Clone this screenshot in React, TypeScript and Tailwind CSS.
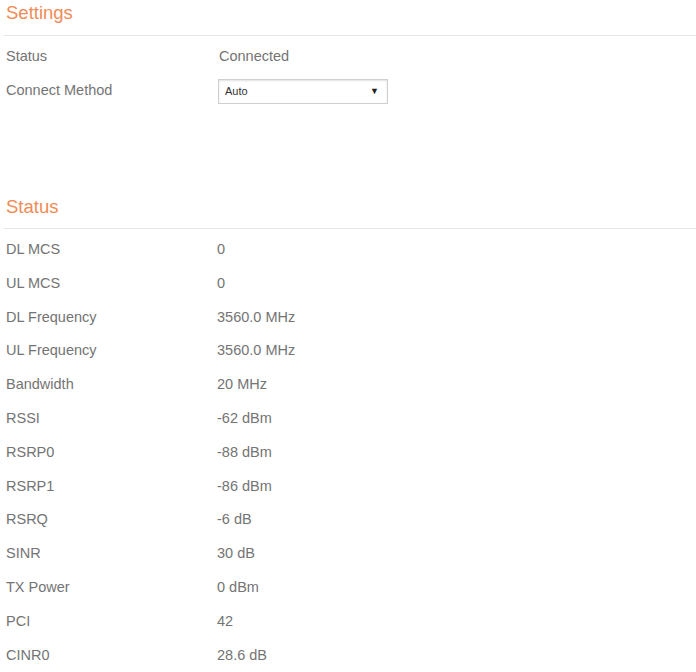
import React from "react";

const statusRows: [string, string][] = [
  ["DL MCS", "0"],
  ["UL MCS", "0"],
  ["DL Frequency", "3560.0 MHz"],
  ["UL Frequency", "3560.0 MHz"],
  ["Bandwidth", "20 MHz"],
  ["RSSI", "-62 dBm"],
  ["RSRP0", "-88 dBm"],
  ["RSRP1", "-86 dBm"],
  ["RSRQ", "-6 dB"],
  ["SINR", "30 dB"],
  ["TX Power", "0 dBm"],
  ["PCI", "42"],
  ["CINR0", "28.6 dB"],
];

export default function App() {
  return (
    <div
      className="w-[696px] h-[672px] bg-white overflow-hidden text-[#747474]"
      style={{ fontFamily: '"Liberation Sans", Arial, sans-serif' }}
    >
      {/* Settings */}
      <div className="ml-[4px] h-[36px] border-b border-[#e6e6e6]">
        <div className="pl-[2px] text-[18.5px] leading-[26px] text-[#f08b57]">Settings</div>
      </div>
      <div className="mt-[4px]">
        <div className="flex h-[34px] items-center text-[14.5px]">
          <div className="w-[219px] pl-[6px]">Status</div>
          <div>Connected</div>
        </div>
        <div className="flex h-[34px] items-center text-[14.5px]">
          <div className="w-[218px] pl-[6px]">Connect Method</div>
          <div className="flex h-[25px] w-[170px] items-center justify-between border border-[#cfcfcf] bg-white pl-[6px] pr-[8px] shadow-[inset_0_1px_2px_rgba(0,0,0,0.12)]">
            <span className="text-[11px] text-[#333]">Auto</span>
            <span className="text-[9px] leading-none text-[#222]">▼</span>
          </div>
        </div>
      </div>

      {/* Status */}
      <div className="ml-[4px] mt-[86px] h-[35px] border-b border-[#e6e6e6]">
        <div className="pl-[2px] text-[18.5px] leading-[26px] text-[#f08b57]">Status</div>
      </div>
      <div className="mt-[4px]">
        {statusRows.map(([k, v]) => (
          <div key={k} className="flex h-[33.8px] items-center text-[14.5px]">
            <div className="w-[217px] pl-[6px]">{k}</div>
            <div>{v}</div>
          </div>
        ))}
      </div>
    </div>
  );
}
